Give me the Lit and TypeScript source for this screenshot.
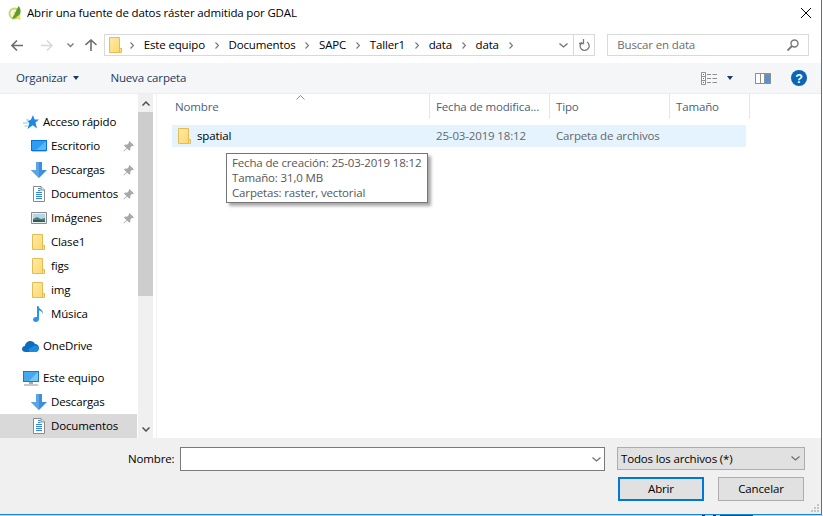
import { LitElement, css, html, svg } from "lit";
import { customElement } from "lit/decorators.js";

type NavItem = {
  label: string;
  icon: string;
  level: 1 | 2;
  pinned?: boolean;
  selected?: boolean;
  gap?: boolean;
};

const folder = (w = 13, h = 16) => svg`
  <svg width=${w} height=${h} viewBox="0 0 13 16">
    <defs>
      <linearGradient id="fg" x1="0" y1="0" x2="1" y2="1">
        <stop offset="0" stop-color="#ffeaa8" />
        <stop offset="1" stop-color="#fcd96e" />
      </linearGradient>
    </defs>
    <path d="M.5.5h10v15H.5z" fill="url(#fg)" stroke="#e3bd54" />
    <path d="M10.500 11.500h2v4h-2z" fill="#fde08a" stroke="#e3bd54" />
  </svg>`;

const icons: Record<string, unknown> = {
  quick: svg`<svg width="16" height="15" viewBox="0 0 16 15">
    <path d="M10 0l1.600 4.500H16l-3.500 3 1.500 6-4.200-3.200L4.500 14l1.800-6-2-1.600 3.700-1.800z" fill="#1e88e5" />
    <path d="M0 8h4.500M1.500 11h3M3 5h3" stroke="#8cc4f2" stroke-width="1.200" />
  </svg>`,
  desktop: svg`<svg width="16" height="12" viewBox="0 0 16 12">
    <path d="M0 0h16v11H0z" fill="#0b74d1" />
    <path d="M1 1h14v9H1z" fill="#2a9df4" />
    <path d="M15 1v9H5z" fill="#59b8f7" />
    <path d="M1 11h14v1H1z" fill="#9ccff5" />
  </svg>`,
  download: svg`<svg width="16" height="16" viewBox="0 0 16 16">
    <path d="M5 0h6v8h5l-8 8-8-8h5z" fill="#3d8edb" />
    <path d="M5 0h3v16l-8-8h5z" fill="#5aa5e8" />
  </svg>`,
  document: svg`<svg width="12" height="16" viewBox="0 0 12 16">
    <path d="M.5.5h7.500l3.500 3.500v11.500H.5z" fill="#fff" stroke="#8a8a8a" />
    <path d="M8 .5v3.500h3.500" fill="#e8e8e8" stroke="#8a8a8a" />
    <path d="M5 2.500h2.500M5 4.500h2.500M3 6.500h6M3 8.500h6M3 10.500h6M3 12.500h6" stroke="#2f86da" />
  </svg>`,
  images: svg`<svg width="16" height="12" viewBox="0 0 16 12">
    <path d="M.5.5h15v11H.5z" fill="#e9eef2" stroke="#8c8c8c" />
    <path d="M2 2h12v8H2z" fill="#b6d5ec" />
    <path d="M2 7l4-2 4 2 4-1v4H2z" fill="#4d7f6e" />
    <path d="M2 8l6 0 6 1v1H2z" fill="#2f5d55" />
  </svg>`,
  folder: folder(),
  music: svg`<svg width="11" height="16" viewBox="0 0 11 16">
    <path d="M4 0h1.400c.4 3 5 3.600 4.600 8-.6-2.200-2.600-3.200-4-3.400V13c0 1.800-1.500 3-3.200 3C1.200 16 0 15 0 13.600c0-1.500 1.400-2.700 3-2.700.4 0 .7 0 1 .2z" fill="#2b93e8" />
  </svg>`,
  cloud: svg`<svg width="17" height="11" viewBox="0 0 17 11">
    <path d="M3.500 11C1.500 11 0 9.700 0 8c0-1.600 1.200-2.800 2.800-3C3.300 2.300 5.500 0 8.300 0c2 0 3.700 1 4.500 2.800C15.200 3 17 4.800 17 7c0 2.300-1.700 4-4 4z" fill="#0f6cbd" />
    <path d="M7 11c-1-2 .2-4.500 3-4.700C11 4.500 14 4 15.500 5.500 17.500 7 17 11 13 11z" fill="#1b8be0" />
  </svg>`,
  computer: svg`<svg width="16" height="15" viewBox="0 0 16 15">
    <path d="M0 0h16v11H0z" fill="#1a79c9" />
    <path d="M1 1h14v9H1z" fill="#45a9ef" />
    <path d="M15 1v9H6z" fill="#79c5f6" />
    <path d="M6 11h4v2H6z" fill="#a9a9a9" />
    <path d="M1 13h14v2H1z" fill="#c7c7c7" />
  </svg>`,
};

const nav: NavItem[] = [
  { label: "Acceso rápido", icon: "quick", level: 1 },
  { label: "Escritorio", icon: "desktop", level: 2, pinned: true },
  { label: "Descargas", icon: "download", level: 2, pinned: true },
  { label: "Documentos", icon: "document", level: 2, pinned: true },
  { label: "Imágenes", icon: "images", level: 2, pinned: true },
  { label: "Clase1", icon: "folder", level: 2 },
  { label: "figs", icon: "folder", level: 2 },
  { label: "img", icon: "folder", level: 2 },
  { label: "Música", icon: "music", level: 2 },
  { label: "OneDrive", icon: "cloud", level: 1, gap: true },
  { label: "Este equipo", icon: "computer", level: 1, gap: true },
  { label: "Descargas", icon: "download", level: 2 },
  { label: "Documentos", icon: "document", level: 2, selected: true },
];

const crumbs = ["Este equipo", "Documentos", "SAPC", "Taller1", "data", "data"];

const columns = [
  { label: "Nombre", width: 261 },
  { label: "Fecha de modifica...", width: 120 },
  { label: "Tipo", width: 120 },
  { label: "Tamaño", width: 80 },
];

const chevron = svg`<svg width="9" height="5" viewBox="0 0 9 5"><path d="M.5.5l4 3.500 4-3.500" fill="none" stroke="#6d6d6d" stroke-width="1.200" /></svg>`;
const crumbSep = svg`<svg width="4" height="7" viewBox="0 0 4 7"><path d="M.5.500l3 3-3 3" fill="none" stroke="#777" stroke-width="1.200" /></svg>`;
const pin = svg`<svg width="11" height="11" viewBox="0 0 11 11">
  <path d="M6.500 0L11 4.500l-1 .6-.8-.3-2 2 .2 2-1 1L4 7.500 1 10.500l-.6-.4 3-3.200L1 4.500l1-1 2 .2 2-2-.2-.8z" fill="#a8a8a8" />
</svg>`;

@customElement("app-root")
export class AppRoot extends LitElement {
  static styles = css`
    :host {
      display: block;
      width: 823px;
      height: 516px;
      overflow: hidden;
      background: #fff;
      color: #000;
      font: 11.5px/16px "Open Sans", sans-serif;
      letter-spacing: -0.15px;
    }

    .window {
      display: flex;
      flex-direction: column;
      height: 515px;
      box-sizing: border-box;
      border-right: 1px solid #1883d7;
      border-bottom: 1px solid #1883d7;
      margin-right: 1px;
    }

    .title {
      display: flex;
      align-items: center;
      height: 27px;
      box-sizing: border-box;
      padding: 0 10px 2px 8px;
      flex: none;
    }

    .title .logo {
      margin-right: 5px;
    }

    .title .text {
      flex: 1;
    }

    .navbar {
      display: flex;
      align-items: center;
      height: 36px;
      box-sizing: border-box;
      flex: none;
      padding: 0 12px 0 11px;
    }

    .navbar .back {
      margin-right: 18px;
    }

    .navbar .forward {
      margin-right: 14px;
    }

    .navbar .recent {
      margin-right: 11px;
    }

    .navbar .up {
      margin-right: 7px;
    }

    .address {
      display: flex;
      align-items: center;
      width: 492px;
      height: 22px;
      box-sizing: border-box;
      border: 1px solid #d9d9d9;
      padding-left: 4px;
      margin-right: 12px;
    }

    .crumbs {
      display: flex;
      flex: 1;
      align-items: center;
      margin-left: 8px;
      gap: 9.8px;
    }

    .address .drop {
      display: flex;
      margin-right: 5px;
    }

    .address .refresh {
      display: flex;
      align-items: center;
      justify-content: center;
      width: 20px;
      height: 20px;
      border-left: 1px solid #d9d9d9;
    }

    .search {
      display: flex;
      align-items: center;
      justify-content: space-between;
      width: 202px;
      height: 22px;
      box-sizing: border-box;
      border: 1px solid #d9d9d9;
      padding: 0 9px;
      color: #6d6d6d;
    }

    .toolbar {
      display: flex;
      align-items: center;
      height: 31px;
      flex: none;
      background: #f5f6f7;
      border-bottom: 1px solid #eceded;
      box-sizing: border-box;
      padding: 0 16px;
      color: #1e395b;
    }

    .toolbar .organize {
      display: flex;
      align-items: center;
      gap: 6px;
      margin-right: 31px;
    }

    .caret {
      width: 0;
      height: 0;
      border-left: 3.5px solid transparent;
      border-right: 3.5px solid transparent;
      border-top: 4px solid #1e395b;
    }

    .toolbar .spacer {
      flex: 1;
    }

    .toolbar .views {
      display: flex;
      align-items: center;
      gap: 10px;
      margin-right: 22px;
    }

    .toolbar .pane {
      display: flex;
      margin-right: 20px;
    }

    .toolbar .help {
      display: flex;
      margin-right: -2px;
    }

    .main {
      display: flex;
      flex: 1;
      min-height: 0;
    }

    .sidebar {
      width: 138px;
      flex: none;
      padding-top: 16px;
      box-sizing: border-box;
      overflow: hidden;
    }

    .nav-row {
      display: flex;
      align-items: center;
      height: 24px;
    }

    .nav-row.gap {
      margin-top: 8px;
    }

    .nav-row.level-1 {
      padding-left: 22px;
    }

    .nav-row.level-2 {
      padding-left: 30px;
    }

    .nav-row.selected {
      background: #d9d9d9;
      margin-right: 1px;
    }

    .nav-icon {
      display: flex;
      align-items: center;
      justify-content: center;
      width: 17px;
      margin-right: 4px;
      flex: none;
    }

    .nav-label {
      flex: 1;
      white-space: nowrap;
    }

    .nav-pin {
      display: flex;
      margin-right: 4px;
    }

    .scroll {
      display: flex;
      flex-direction: column;
      width: 15px;
      flex: none;
      background: #f0f0f0;
    }

    .scroll .arrow {
      display: flex;
      align-items: center;
      justify-content: center;
      height: 18px;
      flex: none;
    }

    .scroll .thumb {
      height: 184px;
      flex: none;
      background: #cdcdcd;
    }

    .scroll .track {
      flex: 1;
    }

    .files {
      position: relative;
      flex: 1;
      padding-left: 3px;
    }

    .list {
      height: 100%;
      border-left: 1px solid #f2f2f2;
    }

    .head {
      display: flex;
      height: 25px;
      padding-left: 12px;
      color: #4c607a;
    }

    .head-cell {
      box-sizing: border-box;
      height: 25px;
      line-height: 25px;
      padding-left: 6px;
      border-right: 1px solid #e5e5e5;
    }

    .sort {
      position: absolute;
      left: 143px;
      top: 1px;
    }

    .row {
      display: flex;
      align-items: center;
      height: 22px;
      width: 574px;
      margin: 6px 0 0 15px;
      background: #e5f3ff;
      color: #666;
    }

    .row .name {
      display: flex;
      align-items: center;
      gap: 6px;
      width: 264px;
      padding-left: 6px;
      box-sizing: border-box;
      color: #000;
    }

    .row .date {
      width: 120px;
    }

    .tooltip {
      position: absolute;
      left: 73px;
      top: 59px;
      width: 202px;
      height: 50px;
      box-sizing: border-box;
      border: 1px solid #767676;
      background: #fff;
      color: #575757;
      padding: 1px 5px;
      line-height: 15px;
      white-space: nowrap;
      box-shadow: 3px 3px 3px rgba(0, 0, 0, 0.35);
    }

    .footer {
      position: relative;
      display: flex;
      flex-direction: column;
      height: 76px;
      flex: none;
      box-sizing: border-box;
      background: #f0f0f0;
      padding: 9px 16px 0 128px;
    }

    .name-row {
      display: flex;
      align-items: flex-start;
      line-height: 23px;
    }

    .name-row label {
      width: 52px;
      flex: none;
    }

    .name-input {
      display: flex;
      align-items: center;
      justify-content: flex-end;
      width: 425px;
      height: 24px;
      box-sizing: border-box;
      border: 1px solid #7a7a7a;
      background: #fff;
      padding-right: 3px;
      margin-right: 12px;
    }

    .filter {
      display: flex;
      align-items: center;
      justify-content: space-between;
      width: 188px;
      height: 23px;
      box-sizing: border-box;
      border: 1px solid #adadad;
      background: #e1e1e1;
      padding: 0 4px 0 3px;
    }

    .actions {
      display: flex;
      justify-content: flex-end;
      gap: 14px;
      margin-top: 6px;
      padding-right: 1px;
    }

    .btn {
      display: flex;
      align-items: center;
      justify-content: center;
      width: 86px;
      height: 24px;
      box-sizing: border-box;
      border: 1px solid #adadad;
      background: #e1e1e1;
    }

    .btn.primary {
      border: 2px solid #0078d7;
    }

    .grip {
      position: absolute;
      right: 2px;
      bottom: 2px;
      display: flex;
    }

    .below {
      height: 1px;
      background: linear-gradient(
        90deg,
        #c9d3da 702px,
        #222 702px,
        #222 705px,
        #c9d3da 705px,
        #c9d3da 713px,
        #222 713px,
        #222 716px,
        #c9d3da 716px,
        #c9d3da 720px,
        #1c5a36 720px,
        #1c5a36 753px,
        #c9d3da 753px
      );
    }
  `;

  private renderNavRow(item: NavItem) {
    const classes = [
      "nav-row",
      `level-${item.level}`,
      item.selected ? "selected" : "",
      item.gap ? "gap" : "",
    ].join(" ");
    return html`
      <div class=${classes}>
        <span class="nav-icon">${icons[item.icon]}</span>
        <span class="nav-label">${item.label}</span>
        ${item.pinned ? html`<span class="nav-pin">${pin}</span>` : null}
      </div>
    `;
  }

  protected override render() {
    return html`
      <div class="window">
        <div class="title">
          <svg class="logo" width="14" height="16" viewBox="0 0 14 16">
            <circle cx="6.500" cy="8.500" r="5" fill="#f7f7d8" stroke="#cbd66f" stroke-width="2" />
            <path d="M4 14L10.500 1c3 3.500 2.500 7 0 9.500-1.800 1.800-3.800 3-6.500 3.500z" fill="#5c9c2e" />
            <path d="M7 6.500L5.500 11" stroke="#c4dc7c" stroke-width="1" />
            <path d="M9.500 11l2.500 3.500" stroke="#e4df4e" stroke-width="2" />
          </svg>
          <span class="text">Abrir una fuente de datos ráster admitida por GDAL</span>
          <svg width="10" height="10" viewBox="0 0 10 10">
            <path d="M0 0l10 10M10 0L0 10" stroke="#000" />
          </svg>
        </div>

        <div class="navbar">
          <svg class="back" width="12" height="11" viewBox="0 0 12 11">
            <path d="M6 .5l-5 5 5 5M1 5.500h11" fill="none" stroke="#6d6d6d" stroke-width="1.600" />
          </svg>
          <svg class="forward" width="12" height="11" viewBox="0 0 12 11">
            <path d="M6 .5l5 5-5 5M11 5.500H0" fill="none" stroke="#d8d8d8" stroke-width="1.600" />
          </svg>
          <svg class="recent" width="7" height="5" viewBox="0 0 7 5">
            <path d="M.5.500L3.500 3.500 6.500.5" fill="none" stroke="#7d7d7d" stroke-width="1.400" />
          </svg>
          <svg class="up" width="12" height="12" viewBox="0 0 12 12">
            <path d="M.5 6l5.500-5 5.500 5M6 1v11" fill="none" stroke="#6d6d6d" stroke-width="1.600" />
          </svg>
          <div class="address">
            ${folder(13, 16)}
            <div class="crumbs">
              ${crumbs.map((c) => html`${crumbSep}<span>${c}</span>`)} ${crumbSep}
            </div>
            <span class="drop">${chevron}</span>
            <span class="refresh">
              <svg width="11" height="12" viewBox="0 0 11 12">
                <path d="M3 3.200A4.500 4.500 0 1 0 8 3" fill="none" stroke="#777" stroke-width="1.300" />
                <path d="M4.500 0v4.500H0" fill="none" stroke="#777" stroke-width="1.300" />
              </svg>
            </span>
          </div>
          <div class="search">
            <span>Buscar en data</span>
            <svg width="12" height="12" viewBox="0 0 12 12">
              <circle cx="7.500" cy="4.500" r="3.500" fill="none" stroke="#777" stroke-width="1.400" />
              <path d="M5 7l-4.500 4.500" stroke="#777" stroke-width="1.800" />
            </svg>
          </div>
        </div>

        <div class="toolbar">
          <span class="organize">Organizar <span class="caret"></span></span>
          <span>Nueva carpeta</span>
          <span class="spacer"></span>
          <span class="views">
            <svg width="16" height="13" viewBox="0 0 16 13">
              <path d="M.5.500h4v12h-4zM.5 4.500h4M.5 8.500h4" fill="#fff" stroke="#8f8f8f" />
              <path d="M2 2h1v1H2zM2 6h1v1H2z" fill="#666" />
              <path d="M2 10h1v1H2z" fill="#c23b3b" />
              <path d="M6 2.500h4M11.500 2.500H16M6 6.500h4M11.500 6.500H16M6 10.500h4M11.500 10.500H16" stroke="#8f8f8f" />
            </svg>
            <span class="caret"></span>
          </span>
          <span class="pane">
            <svg width="16" height="11" viewBox="0 0 16 11">
              <path d="M0 0h16v11H0z" fill="#8f8f8f" />
              <path d="M1 1h4v9H1zM6 1h3v9H6z" fill="#fff" />
              <path d="M10 2h5v8h-5z" fill="#4a96dc" />
            </svg>
          </span>
          <span class="help">
            <svg width="16" height="16" viewBox="0 0 16 16">
              <circle cx="8" cy="8" r="8" fill="#0a64b8" />
              <text x="8" y="12.500" text-anchor="middle" fill="#fff" font-family="Liberation Sans" font-weight="700" font-size="12.500">?</text>
            </svg>
          </span>
        </div>

        <div class="main">
          <div class="sidebar">${nav.map((n) => this.renderNavRow(n))}</div>
          <div class="scroll">
            <span class="arrow">
              <svg width="8" height="5" viewBox="0 0 8 5"><path d="M.5 4.500L4 1l3.500 3.500" fill="none" stroke="#505050" stroke-width="1.500" /></svg>
            </span>
            <div class="thumb"></div>
            <div class="track"></div>
            <span class="arrow">
              <svg width="8" height="5" viewBox="0 0 8 5"><path d="M.5.500L4 4 7.500.5" fill="none" stroke="#505050" stroke-width="1.500" /></svg>
            </span>
          </div>
          <div class="files">
            <div class="list">
              <div class="head">
                ${columns.map(
                  (c) => html`<div class="head-cell" style="width:${c.width}px">${c.label}</div>`,
                )}
              </div>
              <div class="row">
                <span class="name">${folder(13, 16)}<span>spatial</span></span>
                <span class="date">25-03-2019 18:12</span>
                <span>Carpeta de archivos</span>
              </div>
            </div>
            <svg class="sort" width="9" height="5" viewBox="0 0 9 5">
              <path d="M.5 4.500L4.500.5l4 4" fill="none" stroke="#8a8a8a" />
            </svg>
            <div class="tooltip">
              Fecha de creación: 25-03-2019 18:12<br />
              Tamaño: 31,0 MB<br />
              Carpetas: raster, vectorial
            </div>
          </div>
        </div>

        <div class="footer">
          <div class="name-row">
            <label>Nombre:</label>
            <div class="name-input">${chevron}</div>
            <div class="filter"><span>Todos los archivos (*)</span>${chevron}</div>
          </div>
          <div class="actions">
            <div class="btn primary">Abrir</div>
            <div class="btn">Cancelar</div>
          </div>
          <svg class="grip" width="8" height="8" viewBox="0 0 8 8">
            <path d="M6 0h2v2H6zM6 3h2v2H6zM3 3h2v2H3zM6 6h2v2H6zM3 6h2v2H3zM0 6h2v2H0z" fill="#c4c4c4" />
          </svg>
        </div>
      </div>
      <div class="below"></div>
    `;
  }
}
